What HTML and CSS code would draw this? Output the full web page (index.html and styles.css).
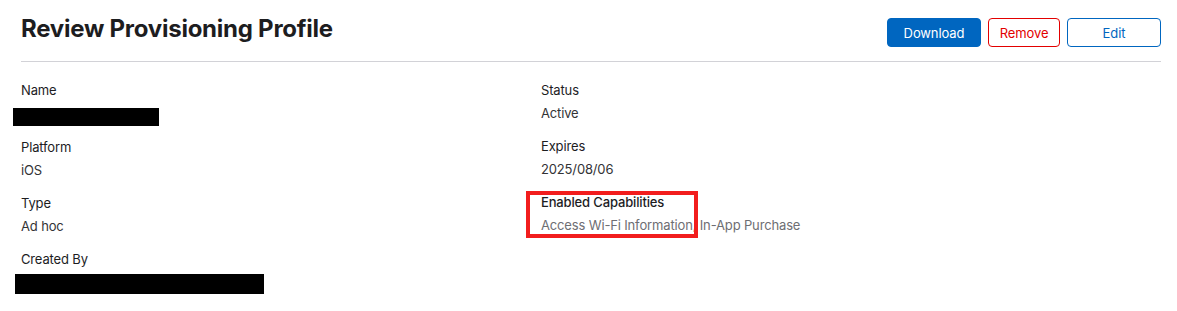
FILE: index.html
```html
<!DOCTYPE html>
<html lang="en">
  <head>
    <meta charset="UTF-8" />
    <meta name="viewport" content="width=device-width, initial-scale=1.0" />
    <title>Review Provisioning Profile</title>
    <link rel="stylesheet" href="styles.css">
  </head>
  <body>
    <div class="page">
      <div class="header">
        <h1>Review Provisioning Profile</h1>
        <div class="actions">
          <a href="#" class="btn btn-primary">Download</a>
          <a href="#" class="btn btn-danger">Remove</a>
          <a href="#" class="btn btn-outline">Edit</a>
        </div>
      </div>

      <div class="details">
        <div class="column">
          <div class="field">
            <div class="label">Name</div>
            <div class="value"><span class="redacted redacted-name"></span></div>
          </div>
          <div class="field">
            <div class="label">Platform</div>
            <div class="value">iOS</div>
          </div>
          <div class="field">
            <div class="label">Type</div>
            <div class="value">Ad hoc</div>
          </div>
          <div class="field">
            <div class="label">Created By</div>
            <div class="value"><span class="redacted redacted-creator"></span></div>
          </div>
        </div>

        <div class="column">
          <div class="field">
            <div class="label">Status</div>
            <div class="value">Active</div>
          </div>
          <div class="field">
            <div class="label">Expires</div>
            <div class="value">2025/08/06</div>
          </div>
          <div class="field highlighted">
            <div class="label label-strong">Enabled Capabilities</div>
            <div class="value value-muted">Access Wi-Fi Information, In-App Purchase</div>
            <span class="highlight-box"></span>
          </div>
        </div>
      </div>
    </div>
  </body>
</html>
```

FILE: styles.css
```css
:root {
  --text: #1d1d1f;
  --muted: #6e6e73;
  --blue: #0066c0;
  --red: #e30000;
  --line: #d2d2d7;
}

* {
  margin: 0;
  padding: 0;
  box-sizing: border-box;
  font-family: "Inter", "Liberation Sans", sans-serif;
}

body {
  background: #ffffff;
  color: var(--text);
  font-size: 13px;
}

.page {
  width: 1140px;
  margin-left: 21px;
}

.header {
  display: flex;
  justify-content: space-between;
  align-items: flex-start;
  padding: 13px 0 14px;
  border-bottom: 1px solid var(--line);
}

.header h1 {
  font-size: 24px;
  font-weight: 700;
  line-height: 32px;
  letter-spacing: -0.25px;
}

.actions {
  display: flex;
  gap: 7px;
  margin-top: 5px;
}

.btn {
  display: flex;
  align-items: center;
  justify-content: center;
  height: 29px;
  width: 94px;
  border-radius: 4px;
  border: 1px solid var(--blue);
  font-size: 13px;
  letter-spacing: -0.1px;
  text-decoration: none;
}

.btn-primary {
  background: var(--blue);
  color: #ffffff;
}

.btn-danger {
  width: 72px;
  border-color: var(--red);
  color: var(--red);
}

.btn-outline {
  color: var(--blue);
}

.details {
  display: grid;
  grid-template-columns: 520px 1fr;
  padding-top: 17px;
}

.field {
  margin-bottom: 10px;
}

.label,
.value {
  line-height: 23px;
  letter-spacing: -0.15px;
}

.label {
  font-weight: 400;
  color: #1d1d1f;
}

.label-strong {
  font-weight: 500;
}

.value {
  color: #333336;
}

.value-muted {
  color: var(--muted);
}

.redacted {
  display: inline-block;
  background: #000000;
  vertical-align: top;
}

.redacted-name {
  width: 146px;
  height: 18px;
  margin: 6px 0 0 -8px;
}

.redacted-creator {
  width: 249px;
  height: 20px;
  margin: 3px 0 0 -6px;
}

.highlighted {
  position: relative;
}

.highlight-box {
  position: absolute;
  left: -15px;
  top: 0;
  width: 172px;
  height: 47px;
  border: 4px solid #f21d1d;
  pointer-events: none;
}
```
